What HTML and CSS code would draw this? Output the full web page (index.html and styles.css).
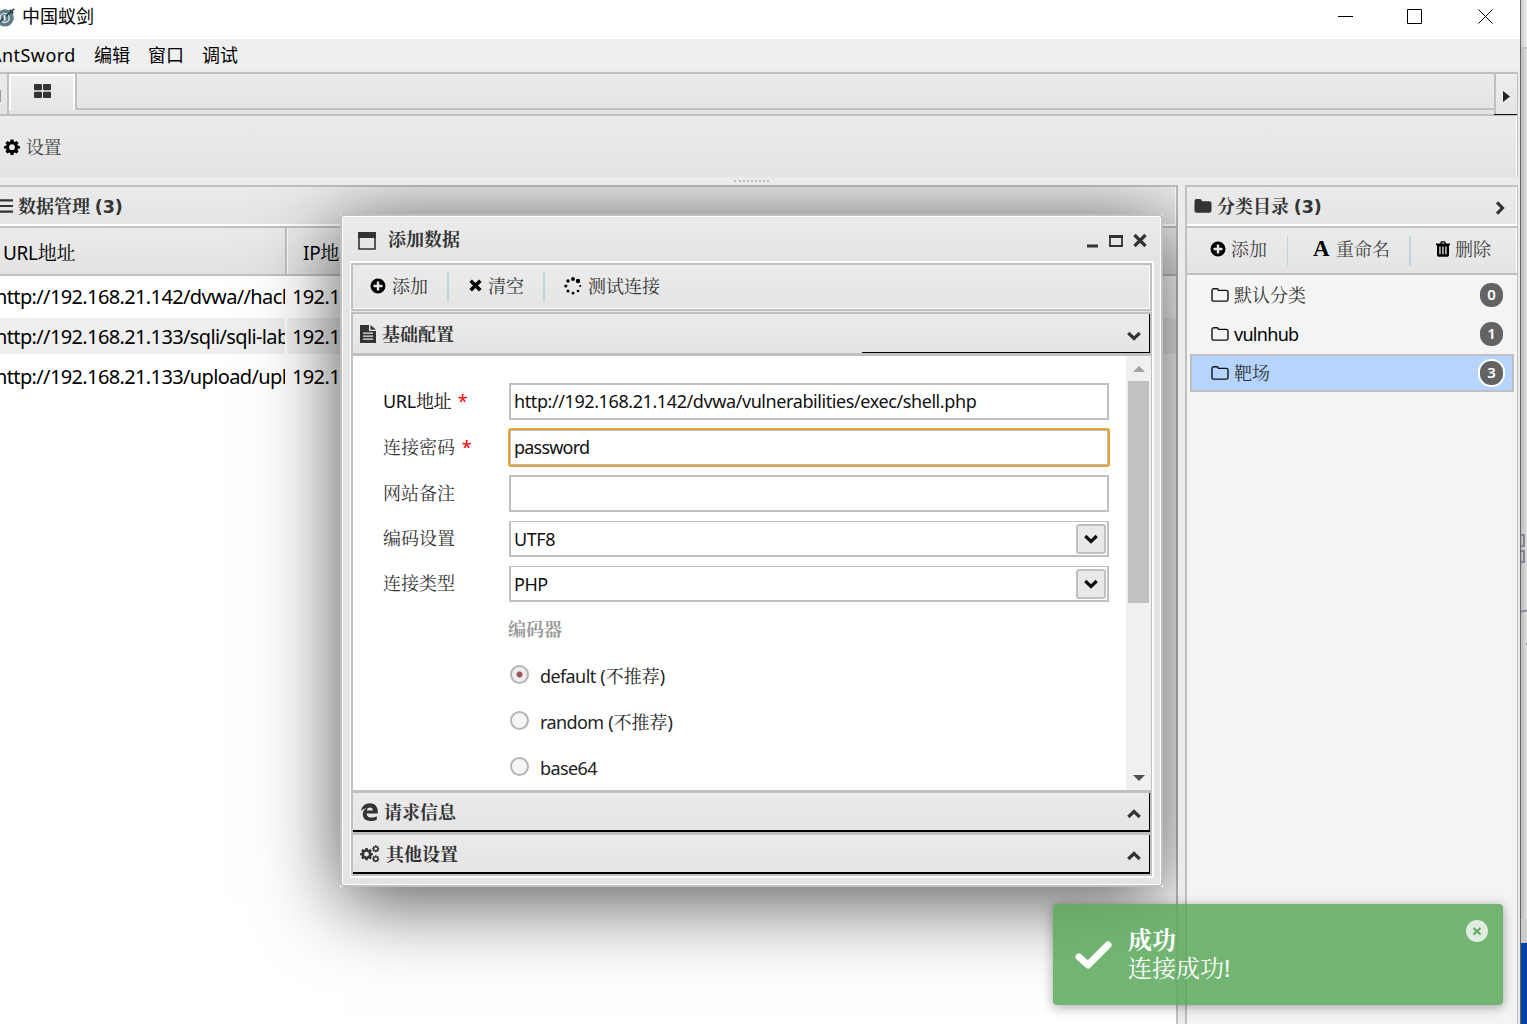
FILE: index.html
```html
<!DOCTYPE html>
<html lang="zh-CN">
<head>
<meta charset="utf-8">
<title>中国蚁剑</title>
<link rel="stylesheet" href="styles.css">
</head>
<body>
<svg width="0" height="0" class="defs">
  <symbol id="plus" viewBox="0 0 16 16"><path fill-rule="evenodd" d="M8 .5a7.5 7.5 0 1 0 0 15 7.500 7.500 0 0 0 0-15zM6.800 3.500h2.400v3.300h3.300v2.400H9.200v3.300H6.800V9.200H3.500V6.800h3.300z"/></symbol>
  <symbol id="gear" viewBox="0 0 16 16"><path fill-rule="evenodd" d="M6.600.6h2.800l.4 2 1.100.5 1.700-1.200 2 2-1.200 1.700.5 1.100 2 .4v2.300l-2 .4-.5 1.100 1.200 1.700-2 2-1.700-1.200-1.100.5-.4 2H6.600l-.4-2-1.100-.5-1.700 1.200-2-2 1.200-1.700-.5-1.100-2-.4V7.100l2-.4.500-1.100L1.400 3.900l2-2 1.700 1.200 1.100-.5zM8 5.300a2.900 2.900 0 1 0 0 5.800 2.900 2.900 0 0 0 0-5.800z"/></symbol>
  <symbol id="folder" viewBox="0 0 18 16"><path fill="none" stroke="currentColor" stroke-width="1.400" d="M1 3.500Q1 1.700 2.700 1.700h3.200q1.500 0 1.500 1.700h7.700q1.900 0 1.900 1.800v7.200q0 1.700-1.800 1.700H2.800Q1 14.100 1 12.400z"/></symbol>
  <symbol id="folder-full" viewBox="0 0 18 16"><path d="M.5 3.200Q.5 1 2.600 1h3.200Q8 1 8 3.200h7.300q2.200 0 2.200 2.100v7.300q0 2.200-2.200 2.200H2.700q-2.200 0-2.200-2.200z"/></symbol>
  <symbol id="chevron" viewBox="0 0 14 10"><path fill="none" stroke="currentColor" stroke-width="3.200" d="M1.300 2 7 7.500 12.700 2"/></symbol>
  <symbol id="cross" viewBox="0 0 14 14"><path fill="none" stroke="currentColor" stroke-width="3.800" d="M1.800 1.800l10.400 10.400M12.200 1.800 1.800 12.200"/></symbol>
</svg>
<div class="screen">
  <div class="window">
    <div class="titlebar">
      <svg class="logo" viewBox="0 0 22 22"><circle cx="10" cy="12" r="9.500" fill="#5d7c89"/><circle cx="9.500" cy="12" r="5" fill="none" stroke="#dce5e8" stroke-width="1.500"/><path d="M1 19 20 2M15 3l4 4" stroke="#25363f" stroke-width="1.700"/><path d="M9.500 9v6" stroke="#fff" stroke-width="2"/></svg>
      <span class="app-name">中国蚁剑</span>
      <svg class="winctl" width="156" height="17" viewBox="0 0 156 17" fill="none" stroke="#000"><path d="M0 8.500h15M69.500 1.500h14v14h-14zM140.500 1.500l14 14M154.500 1.500l-14 14"/></svg>
    </div>
    <div class="menubar"><span class="m1">AntSword</span><span>编辑</span><span>窗口</span><span>调试</span></div>
    <div class="tabbar">
      <div class="scroll-left"><i></i></div>
      <div class="tab"><svg width="17" height="14" viewBox="0 0 17 14" fill="#333"><rect width="8" height="6.300" rx="1"/><rect x="9" width="8" height="6.300" rx="1"/><rect y="7.700" width="8" height="6.300" rx="1"/><rect x="9" y="7.700" width="8" height="6.300" rx="1"/></svg></div>
      <div class="tab-rest"></div>
      <div class="scroll-right"><svg width="7" height="11"><path d="M0 0 7 5.500 0 11z" fill="#222"/></svg></div>
    </div>
    <div class="toolbar"><svg class="ic16" width="16" height="16"><use href="#gear"/></svg><span>设置</span></div>
    <div class="splitter"><i></i></div>
    <div class="main">
      <section class="data">
        <header class="head"><svg width="13" height="14" viewBox="0 0 13 14"><path d="M0 1.300h13M0 7h13M0 12.700h13" stroke="#333" stroke-width="2.200"/></svg><b>数据管理 <em>(3)</em></b></header>
        <div class="cols"><div class="c1">URL地址</div><div class="c2">IP地址</div></div>
        <div class="row"><div class="c1">http://192.168.21.142/dvwa//hackable</div><div class="c2">192.168.21.142</div></div>
        <div class="row alt"><div class="c1">http://192.168.21.133/sqli/sqli-labs</div><div class="c2">192.168.21.133</div></div>
        <div class="row"><div class="c1">http://192.168.21.133/upload/upload</div><div class="c2">192.168.21.133</div></div>
      </section>
      <div class="gap"></div>
      <section class="cats">
        <header class="head"><svg width="18" height="16" fill="#333"><use href="#folder-full"/></svg><b>分类目录 <em>(3)</em></b><svg class="go" width="14" height="10"><use href="#chevron"/></svg></header>
        <div class="cat-tools">
          <div class="t1"><svg width="16" height="16"><use href="#plus"/></svg>添加</div>
          <div class="t2"><span class="bigA">A</span>重命名</div>
          <div class="t3"><svg width="14" height="16" viewBox="0 0 14 16"><path fill-rule="evenodd" d="M0 2.500h4L5 .3h4l1 2.200h4v1.800h-1V14q0 1.700-1.700 1.700H2.700Q1 15.700 1 14V4.300H0zM5.400 2.500h3.200l-.4-.9H5.800zM3.300 5.500v7.800h1.300V5.500zm3 0v7.800h1.300V5.500zm3 0v7.800h1.300V5.500z"/></svg>删除</div>
        </div>
        <div class="list">
          <div class="item"><svg width="18" height="16"><use href="#folder"/></svg><span>默认分类</span><i>0</i></div>
          <div class="item"><svg width="18" height="16"><use href="#folder"/></svg><span class="narrow">vulnhub</span><i>1</i></div>
          <div class="item sel"><svg width="18" height="16"><use href="#folder"/></svg><span>靶场</span><i>3</i></div>
        </div>
      </section>
      <div class="shade"><div></div></div>
      <div class="dialog">
        <div class="dlg-title">
          <svg width="18" height="18"><path d="M1 1h16v16H1z" fill="none" stroke="#333" stroke-width="1.600"/><path d="M0 0h18v6H0z" fill="#333"/></svg>
          <b>添加数据</b>
          <svg class="dlg-ctl" width="62" height="16" fill="none" stroke="#333"><path d="M1 13h11" stroke-width="3"/><path d="M24 4h12v9H24z" stroke-width="1.800"/><path d="M23 3.500h14" stroke-width="3"/><path d="M48.500 2l11 11M59.500 2l-11 11" stroke-width="3.200"/></svg>
        </div>
        <div class="dlg-body">
          <div class="dlg-tools">
            <div class="d1"><svg width="16" height="16"><use href="#plus"/></svg>添加</div>
            <div class="d2"><svg width="13" height="13"><use href="#cross"/></svg>清空</div>
            <div class="d3"><svg width="18" height="18"><g><circle cx="9" cy="2" r="1.900"/><circle cx="14" cy="4" r="2.200"/><circle cx="16.200" cy="9" r="1.100"/><circle cx="14" cy="14" r="1.300"/><circle cx="9" cy="16.200" r="1.400"/><circle cx="4" cy="14" r="1.500"/><circle cx="1.800" cy="9" r="1.600"/><circle cx="4" cy="4" r="1.700"/></g></svg>测试连接</div>
          </div>
          <div class="acc open"><svg width="16" height="18" viewBox="0 0 16 18"><path fill="#333" d="M0 0h9v6h7v12H0z"/><path fill="#333" d="M10.500 0 16 4.700h-5.500z"/><path d="M3 8.200h10M3 11.200h10M3 14.200h10" stroke="#e8e8e8" stroke-width="1.200"/></svg><b>基础配置</b><svg class="arr" width="14" height="10"><use href="#chevron"/></svg></div>
          <div class="content">
            <div class="form">
              <div class="field"><label>URL地址 <s>*</s></label><div class="input url">http://192.168.21.142/dvwa/vulnerabilities/exec/shell.php</div></div>
              <div class="field"><label>连接密码 <s>*</s></label><div class="input focus">password</div></div>
              <div class="field"><label>网站备注</label><div class="input"></div></div>
              <div class="field"><label>编码设置</label><div class="input select">UTF8<span><svg width="14" height="10"><use href="#chevron"/></svg></span></div></div>
              <div class="field"><label>连接类型</label><div class="input select">PHP<span><svg width="14" height="10"><use href="#chevron"/></svg></span></div></div>
              <div class="opt-title">编码器</div>
              <div class="radio"><i class="on"></i><span><u>default</u> (不推荐)</span></div>
              <div class="radio"><i></i><span><u>random</u> (不推荐)</span></div>
              <div class="radio"><i></i><span><u>base64</u></span></div>
            </div>
            <div class="scrollbar"><svg width="12" height="6"><path d="M0 6 6 0l6 6z" fill="#a3a3a3"/></svg><div class="thumb"></div><svg class="dn" width="12" height="6"><path d="M0 0h12L6 6z" fill="#505050"/></svg></div>
          </div>
          <div class="acc"><svg width="17" height="18" viewBox="0 0 17 18"><path fill="#333" fill-rule="evenodd" d="M0 8.200C.8 3 4.200.2 8.800.2c5 0 8 3.300 8 8.300v2H5.600c.2 3 2.300 4.100 5 4.100 2 0 3.700-.5 5.200-1.400v3.600c-1.800.8-3.800 1.200-6.200 1.200-4.700 0-7.800-2.400-7.800-6.700 0-2.600 1.300-4.800 3.700-6.200C3.300 5.600 1.400 6.600 0 8.200zM5.800 7.500h6c0-2-1-3.100-2.900-3.100-1.700 0-2.800 1.200-3.100 3.100z"/></svg><b>请求信息</b><svg class="arr up" width="14" height="10"><use href="#chevron"/></svg></div>
          <div class="acc last"><svg width="20" height="18" viewBox="0 0 20 18" fill="#333"><use href="#gear" x="0" y="2.500" width="13" height="13"/><use href="#gear" x="12" y="0" width="7.500" height="7.500"/><use href="#gear" x="12" y="10" width="7.500" height="7.500"/></svg><b>其他设置</b><svg class="arr up" width="14" height="10"><use href="#chevron"/></svg></div>
        </div>
      </div>
    </div>
  </div>
  <div class="behind"><div class="b-top"></div><div class="b-mid"><svg width="7" height="160" fill="none" stroke="#85859a" stroke-width="2"><path d="M0 1h3v11H0M0 17h3v11H0M0 78q3-2 7-1M5 110h2"/></svg></div><div class="b-gray"></div><div class="b-blue"></div></div>
  <div class="toast">
    <svg class="check" width="38" height="30"><path d="M4 17l9 8L33 5" fill="none" stroke="#fff" stroke-width="7" stroke-linecap="round" stroke-linejoin="round"/></svg>
    <div class="msg"><b>成功</b><span>连接成功!</span></div>
    <svg class="x" width="22" height="22"><circle cx="11" cy="11" r="11" fill="#dfecdf"/><path d="M7.500 8l7 6.500M14.500 8l-7 6.500" stroke="#5fa860" stroke-width="2"/></svg>
  </div>
</div>
</body>
</html>
```
FILE: styles.css
```css
* { box-sizing: border-box; }
body { margin: 0; font: 18px/24px "Noto Sans", "Noto Serif CJK SC", "Noto Sans CJK SC", sans-serif; color: #000; }
svg { display: block; flex: none; }
.defs { position: absolute; }
.screen { position: relative; display: flex; width: 1527px; height: 1024px; overflow: hidden; }
.window { display: flex; flex-direction: column; width: 1520px; height: 1024px; background: #ebebeb; }
.titlebar { display: flex; align-items: center; height: 39px; background: #fff; padding-bottom: 6px; }
.logo { width: 20px; height: 22px; margin: 0 6px 0 -4px; }
.winctl { margin-left: auto; margin-right: 26px; }
.app-name, .menubar { font-family: "Noto Sans", "Noto Sans CJK SC", sans-serif; }
.app-name { padding-bottom: 1px; }
.menubar { display: flex; align-items: center; gap: 18px; height: 33px; background: #efefef; border-bottom: 3px solid #ebebeb; padding-top: 2px; }
.m1 { margin-left: -10px; width: 86px; letter-spacing: .45px; }
.tabbar { display: flex; height: 44px; width: 1518px; border: 2px solid #c0c0c0; border-left: 0; border-right-width: 1px; background: #e4e4e4; }
.scroll-left { width: 9px; background: linear-gradient(#ebebeb, #e4e4e4); border-right: 2px solid #c0c0c0; padding-top: 16px; }
.scroll-left i { display: block; width: 1px; height: 12px; background: #999; }
.tab { display: flex; justify-content: center; width: 66px; height: 36px; background: linear-gradient(#eee, #e6e6e6); border: 2px solid #fff; border-bottom: 0; padding-top: 8px; }
.tab-rest { flex: 1; height: 36px; border: solid #c0c0c0; border-width: 0 0 2px 2px; background: linear-gradient(#ebebeb, #e4e4e4); }
.scroll-right { width: 23px; border-left: 2px solid #c0c0c0; background: linear-gradient(#eee, #e4e4e4); padding: 17px 0 0 7px; box-shadow: 0 1px #111; }
.toolbar { display: flex; align-items: center; gap: 6px; height: 61px; width: 1518px; padding-left: 4px; background: linear-gradient(#ebebeb, #e4e4e4); border-right: 1px solid #c0c0c0; box-shadow: inset -1px 0 #fff; color: #444; }
.toolbar svg { fill: #000; }
.toolbar span { letter-spacing: -.4px; }
.splitter { height: 8px; padding: 3px 0 0 734px; }
.splitter i { display: block; width: 35px; border-top: 2px dotted #bbb; }
.main { position: relative; display: flex; height: 839px; width: 1520px; overflow: hidden; }
.data { width: 1178px; background: #fff; border: 2px solid #c0c0c0; border-left: 0; border-bottom: 0; }
.gap { width: 7px; }
.cats { width: 333px; background: #f4f4f4; border: solid #c0c0c0; border-width: 2px 1px 0 2px; }
.head { display: flex; align-items: center; gap: 5px; height: 41px; background: linear-gradient(#ebebeb, #e4e4e4); border-bottom: 2px solid #c0c0c0; box-shadow: inset 0 -2px #fff, inset -1px 0 #fff; color: #333; padding-bottom: 1px; }
b { font-weight: 700; }
.head b { padding-bottom: 1px; }
.head em { font: bold 17.500px "DejaVu Sans", sans-serif; }
.cats .head { padding-left: 7px; gap: 5px; }
.go { margin: 3px 10px 0 auto; transform: rotate(-90deg); }
.cols { display: flex; height: 48px; background: linear-gradient(#ebebeb, #e2e2e2); border-bottom: 2px solid #c0c0c0; font-size: 19px; line-height: 50px; letter-spacing: -.3px; }
.cols .c1 { width: 287px; padding-left: 3px; border-right: 2px solid #c0c0c0; }
.cols .c2 { padding-left: 15px; border-left: 1px solid #fff; flex: 1; }
.row { display: flex; gap: 2px; height: 36px; margin-top: 4px; line-height: 37px; font-size: 20px; letter-spacing: -.63px; white-space: nowrap; }
.row:nth-of-type(2) { margin-top: 2px; }
.row .c1 { width: 285px; overflow: hidden; text-indent: -5px; }
.row .c2 { flex: 1; padding-left: 5px; }
.alt > div { background: #efefef; }
.cat-tools { display: flex; align-items: center; height: 47px; background: linear-gradient(#ebebeb, #e4e4e4); border-bottom: 2px solid #c0c0c0; color: #444; box-shadow: inset -1px 0 #fff; }
.cat-tools svg, .dlg-tools svg { fill: #000; color: #000; }
.cat-tools > div { display: flex; align-items: center; height: 30px; gap: 5px; padding-bottom: 3px; }
.t1 { width: 101px; padding-left: 23px; border-right: 1px solid #c3d5dc; }
.t2 { width: 123px; padding-left: 25px; border-right: 2px solid #c3d5dc; }
.t3 { padding-left: 25px; }
.bigA { font: bold 23px "Liberation Serif", serif; color: #000; width: 18px; }
.list { padding: 1px 3px; }
.item { display: flex; align-items: center; gap: 5px; height: 39px; padding: 0 11px 2px 21px; }
.item:first-child, .item.sel { color: #333; }
.item svg { color: #111; }
.narrow { letter-spacing: -.7px; }
.item.sel { height: 38px; background: #b5d5ff; border: 2px solid #c0c0c0; padding: 0 9px 0 19px; }
.item i { margin-left: auto; width: 23px; height: 24px; border-radius: 11px; background: #636363; color: #fff; font: 600 15px/23px "Noto Sans", sans-serif; text-align: center; }
.sel i { box-shadow: 0 0 0 2px #fff; }
.shade { position: absolute; inset: 0 auto 0 0; width: 1178px; overflow: hidden; }
.shade div { position: absolute; left: 340px; top: 29px; width: 823px; height: 673px; box-shadow: 0 14px 76px rgba(0,0,0,.68); }
.dialog { position: absolute; left: 340px; top: 29px; width: 823px; height: 673px; border: 2px solid #c0c0c0; border-radius: 4px; background: #e4e4e4; box-shadow: inset 0 0 0 1px #fff; }
.dlg-title { display: flex; align-items: center; gap: 12px; height: 44px; margin: 1px 1px 0; padding: 4px 12px 0 15px; background: linear-gradient(#ebebeb, #e4e4e4); color: #333; }
.dlg-title b { padding-bottom: 5px; }
.dlg-ctl { margin-left: auto; }
.dlg-body { display: flex; flex-direction: column; width: 804px; height: 617px; margin-left: 8px; border: 2px solid #fff; border-left-width: 1px; }
.dlg-tools { display: flex; align-items: center; height: 48px; border: 2px solid #c0c0c0; background: linear-gradient(#ebebeb, #e4e4e4); box-shadow: inset -1px -1px #fff; color: #333; margin-bottom: 1px; }
.dlg-tools > div { display: flex; align-items: center; height: 30px; padding-bottom: 3px; }
.d1 { width: 96px; gap: 6px; padding-left: 17px; border-right: 2px solid #c3d5dc; }
.d2 { width: 96px; gap: 6px; padding-left: 20px; border-right: 2px solid #c3d5dc; }
.d3 { padding-left: 19px; gap: 6px; }
.acc { display: flex; align-items: center; gap: 6px; height: 42px; border: solid #c0c0c0; border-width: 3px 2px 0; background: linear-gradient(#ebebeb, #e4e4e4); box-shadow: inset -1px -2px #000; padding: 0 9px 2px 8px; color: #333; }
.acc.open { height: 44px; border-width: 2px 2px 3px; padding: 0 9px 0 7px; box-shadow: inset -1px 0 #000; background: linear-gradient(#000, #000) right 0 bottom 0 / 288px 1px no-repeat padding-box, linear-gradient(#ebebeb, #e4e4e4); }
.acc.last { height: 44px; border-bottom: 2px solid #c0c0c0; padding-left: 7px; }
.arr { margin-left: auto; margin-top: 4px; }
.up { transform: rotate(180deg); }
.content { display: flex; height: 434px; background: #fff; border: solid #c0c0c0; border-width: 0 1px 0 2px; }
.form { width: 773px; padding: 27px 17px 0 30px; }
.field { display: flex; align-items: center; height: 37px; margin-bottom: 9px; }
.field label { width: 126px; color: #333; padding-bottom: 2px; }
.field:first-child label { color: #111; letter-spacing: -.3px; }
s { color: red; text-decoration: none; margin-left: 2px; }
.input { position: relative; width: 600px; height: 37px; border: 2px solid #c0c0c0; padding-left: 3px; line-height: 32px; color: #111; letter-spacing: -.6px; white-space: nowrap; }
.url { letter-spacing: -.41px; }
.focus { border-color: #b8bcc6; outline: 2px solid #e5a52e; outline-offset: -1px; border-radius: 2px; letter-spacing: -.8px; }
.field:nth-child(4) { height: 36px; }
.field:nth-child(5) { height: 36px; margin-bottom: 0; }
.select { display: flex; justify-content: space-between; height: 36px; padding-right: 1px; border-top-width: 1px; line-height: 34px; letter-spacing: -.45px; }
.select span { display: flex; align-items: center; justify-content: center; width: 30px; height: 30px; margin-top: 2px; border: 2px solid #c0c0c0; border-radius: 3px; background: #e8e8e8; }
.opt-title { height: 46px; margin: 5px 0 0 125px; line-height: 45px; font-weight: bold; color: #999; }
.radio { display: flex; align-items: center; gap: 11px; height: 46px; margin-left: 127px; padding-bottom: 1px; color: #222; }
.radio u { text-decoration: none; letter-spacing: -.6px; }
.radio i { width: 19px; height: 19px; margin-bottom: 2px; border: 2px solid #b9b4b6; border-radius: 50%; background: #f5f5f5; }
.radio .on { background: radial-gradient(circle, #9b5555 0 2.500px, #eee 3.500px); }
.scrollbar { display: flex; flex-direction: column; align-items: center; width: 25px; height: 434px; background: #f0f0f0; padding: 10px 0 9px; }
.thumb { width: 21px; height: 222px; margin-top: 9px; background: #c1c1c1; }
.dn { margin-top: auto; }
.behind { width: 7px; height: 1024px; border-left: 1px solid #666; background: linear-gradient(90deg, #bbb, #e0e0e0); }
.b-top { height: 49px; border-bottom: 2px solid #c0c0c0; background: linear-gradient(90deg, #ccc, #eee); }
.b-mid { height: 870px; padding-top: 485px; }
.b-gray { height: 24px; background: #ccc; }
.b-blue { height: 81px; background: #06429f; }
.toast { position: absolute; left: 1053px; top: 904px; display: flex; width: 450px; height: 101px; border-radius: 4px; background: rgba(92,169,92,.86); box-shadow: 0 2px 12px rgba(0,0,0,.35); color: #fff; font-size: 24px; line-height: 28px; }
.check { margin: 36px 15px 0 22px; }
.msg { display: flex; flex-direction: column; padding-top: 22px; }
.x { margin: 16px 15px 0 auto; }
```
